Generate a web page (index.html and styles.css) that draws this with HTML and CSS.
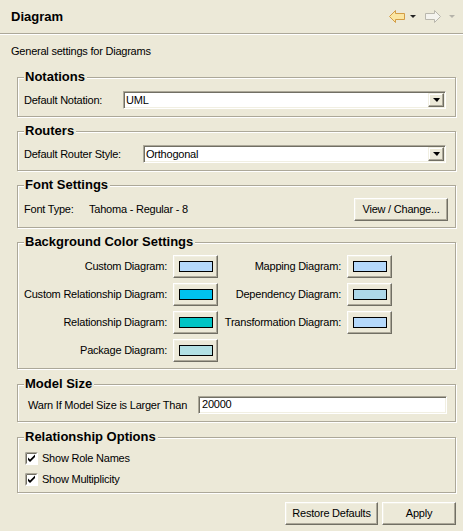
FILE: index.html
```html
<!DOCTYPE html>
<html>
<head>
<meta charset="utf-8">
<title>Diagram</title>
<link rel="stylesheet" href="styles.css">
</head>
<body>
<header class="hdr">
  <h1 class="hdr-title">Diagram</h1>
  <div class="nav">
    <svg class="nav-arrow" width="16" height="13" viewBox="0 0 16 13"><path d="M0.5 6.5 L6.5 0.5 L6.5 3.5 L15.5 3.5 L15.5 9.5 L6.5 9.5 L6.5 12.5 Z" fill="#fbe6a2" stroke="#d39d45"/></svg>
    <span class="caret caret-dark"></span>
    <svg class="nav-arrow nav-fwd" width="16" height="13" viewBox="0 0 16 13"><path d="M15.5 6.5 L9.5 0.5 L9.5 3.5 L0.5 3.5 L0.5 9.5 L9.5 9.5 L9.5 12.5 Z" fill="#f4f3ee" stroke="#b9b7ad"/></svg>
    <span class="caret caret-light"></span>
  </div>
</header>

<p class="desc">General settings for Diagrams</p>

<fieldset class="group">
  <legend>Notations</legend>
  <div class="row">
    <span class="lbl lbl-notation">Default Notation:</span>
    <div class="combo"><span class="combo-text">UML</span><span class="combo-btn"><span class="tri"></span></span></div>
  </div>
</fieldset>

<fieldset class="group">
  <legend>Routers</legend>
  <div class="row">
    <span class="lbl lbl-router">Default Router Style:</span>
    <div class="combo"><span class="combo-text">Orthogonal</span><span class="combo-btn"><span class="tri"></span></span></div>
  </div>
</fieldset>

<fieldset class="group group-font">
  <legend>Font Settings</legend>
  <div class="row">
    <span class="lbl lbl-font">Font Type:</span>
    <span class="font-value">Tahoma - Regular - 8</span>
    <button class="btn btn-view">View / Change...</button>
  </div>
</fieldset>

<fieldset class="group group-colors">
  <legend>Background Color Settings</legend>
  <div class="color-grid">
    <span class="clbl">Custom Diagram:</span>
    <button class="btn cbtn"><span class="swatch" style="background:#b5d9fb"></span></button>
    <span class="clbl">Mapping Diagram:</span>
    <button class="btn cbtn"><span class="swatch" style="background:#b5d9fb"></span></button>

    <span class="clbl">Custom Relationship Diagram:</span>
    <button class="btn cbtn"><span class="swatch" style="background:#00c2ef"></span></button>
    <span class="clbl">Dependency Diagram:</span>
    <button class="btn cbtn"><span class="swatch" style="background:#add8e9"></span></button>

    <span class="clbl">Relationship Diagram:</span>
    <button class="btn cbtn"><span class="swatch" style="background:#00c4c4"></span></button>
    <span class="clbl">Transformation Diagram:</span>
    <button class="btn cbtn"><span class="swatch" style="background:#b5d9fb"></span></button>

    <span class="clbl">Package Diagram:</span>
    <button class="btn cbtn"><span class="swatch" style="background:#b2e0e3"></span></button>
  </div>
</fieldset>

<fieldset class="group group-model">
  <legend>Model Size</legend>
  <div class="row">
    <span class="lbl lbl-model">Warn If Model Size is Larger Than</span>
    <div class="field">20000</div>
  </div>
</fieldset>

<fieldset class="group group-rel">
  <legend>Relationship Options</legend>
  <div class="check-row">
    <svg class="check" width="13" height="13" viewBox="0 0 13 13"><rect x="0" y="0" width="13" height="13" fill="#fff"/><path d="M0.5 12.5 V0.5 H12.5" fill="none" stroke="#aca899"/><path d="M1.5 11.5 V1.5 H11.5" fill="none" stroke="#716f64"/><path d="M3 5.5 L5 7.5 L10 2.5 V5 L5 10 L3 8 Z" fill="#000"/></svg>
    <span>Show Role Names</span>
  </div>
  <div class="check-row">
    <svg class="check" width="13" height="13" viewBox="0 0 13 13"><rect x="0" y="0" width="13" height="13" fill="#fff"/><path d="M0.5 12.5 V0.5 H12.5" fill="none" stroke="#aca899"/><path d="M1.5 11.5 V1.5 H11.5" fill="none" stroke="#716f64"/><path d="M3 5.5 L5 7.5 L10 2.5 V5 L5 10 L3 8 Z" fill="#000"/></svg>
    <span>Show Multiplicity</span>
  </div>
</fieldset>

<div class="actions">
  <button class="btn btn-restore">Restore Defaults</button>
  <button class="btn btn-apply">Apply</button>
</div>
</body>
</html>
```

FILE: styles.css
```css
* { box-sizing: border-box; }

html, body {
  margin: 0;
  padding: 0;
}

body {
  width: 463px;
  height: 531px;
  overflow: hidden;
  background: #ece9d8;
  color: #000;
  font-family: "Liberation Sans", Arial, sans-serif;
  font-size: 11px;
  line-height: 13px;
  letter-spacing: -0.22px;
}

/* header */
.hdr {
  height: 34px;
  display: flex;
  align-items: center;
  justify-content: space-between;
  padding: 0 8px 0 11px;
  border-bottom: 1px solid #aca899;
  box-shadow: 0 1px 0 #fff;
}

.hdr-title {
  margin: 0;
  font-size: 13px;
  font-weight: bold;
  line-height: 16px;
  letter-spacing: 0;
}

.nav {
  display: flex;
  align-items: center;
}

.nav-arrow { display: block; }
.nav-fwd { margin-left: 9px; }

.caret {
  width: 0;
  height: 0;
  border-left: 3px solid transparent;
  border-right: 3px solid transparent;
  border-top: 3px solid #000;
  margin-left: 5px;
}
.caret-dark { border-top-color: #222; }
.caret-light { border-top-color: #b5b3aa; margin-left: 8px; }

.desc {
  margin: 10px 0 0 11px;
  line-height: 14px;
}

/* group boxes */
.group {
  margin: 12px 7px 0 17px;
  padding: 7px 9px 7px 6px;
  border: 1px solid #aca899;
  box-shadow: inset 1px 1px 0 #fff, 1px 1px 0 #fff;
  min-width: 0;
}
.group + .group { margin-top: 7px; }

.group legend {
  padding: 0 2px 0 1px;
  font-size: 13px;
  font-weight: bold;
  line-height: 14px;
  letter-spacing: 0;
  background: #ece9d8;
}

.row {
  display: flex;
  align-items: center;
}

.lbl { flex: none; white-space: nowrap; }
.lbl-notation { width: 99px; }
.lbl-router { width: 119px; }
.lbl-font { width: 65px; }
.lbl-model { width: 174px; padding-left: 4px; }

/* combo */
.combo {
  flex: 1;
  height: 18px;
  display: flex;
  padding: 1px;
  background: #fff;
  border: 1px solid;
  border-color: #aca899 #fff #fff #aca899;
  box-shadow: inset 1px 1px 0 #716f64, inset -1px -1px 0 #f1efe2;
}

.combo-text {
  flex: 1;
  padding-left: 1px;
  line-height: 14px;
}

.combo-btn {
  width: 16px;
  display: flex;
  align-items: center;
  justify-content: center;
  background: #ece9d8;
  border: 1px solid;
  border-color: #f1efe2 #716f64 #716f64 #f1efe2;
  box-shadow: inset -1px -1px 0 #aca899, inset 1px 1px 0 #fff;
}

.tri {
  width: 0;
  height: 0;
  border-left: 4px solid transparent;
  border-right: 3px solid transparent;
  border-top: 4px solid #000;
}

/* buttons */
.btn {
  font: inherit;
  letter-spacing: inherit;
  color: #000;
  height: 23px;
  padding: 0;
  background: #ece9d8;
  border: 1px solid;
  border-color: #fff #716f64 #716f64 #fff;
  box-shadow: inset -1px -1px 0 #aca899, inset 1px 1px 0 #f1efe2;
  border-radius: 0;
}

.font-value { flex: 1; }

.btn-view {
  width: 94px;
  margin-right: -2px;
}

.group-font { padding-top: 6px; padding-bottom: 6px; }

/* color grid */
.group-colors { padding-top: 6px; padding-bottom: 6px; }

.color-grid {
  display: grid;
  grid-template-columns: 143px 45px 117px 45px;
  grid-auto-rows: 23px;
  column-gap: 6px;
  row-gap: 5px;
  align-items: center;
}

.clbl {
  justify-self: end;
  white-space: nowrap;
}

.cbtn {
  width: 45px;
  display: flex;
  align-items: center;
  justify-content: center;
}

.swatch {
  display: block;
  width: 34px;
  height: 11px;
  border: 1px solid #000;
}

/* model size */
.group.group-model { margin-top: 8px; padding-top: 5px; }

.field {
  flex: 1;
  height: 18px;
  margin-right: -1px;
  padding-left: 3px;
  line-height: 14px;
  background: #fff;
  border: 1px solid;
  border-color: #aca899 #fff #fff #aca899;
  box-shadow: inset 1px 1px 0 #716f64, inset -1px -1px 0 #f1efe2;
}

/* relationship options */
.group.group-rel { margin-top: 8px; padding-top: 8px; padding-bottom: 6px; }

.check-row {
  display: flex;
  align-items: center;
  height: 13px;
  padding-left: 1px;
}
.check-row + .check-row { margin-top: 8px; }

.check { display: block; margin-right: 4px; }

/* bottom buttons */
.actions {
  display: flex;
  justify-content: flex-end;
  gap: 4px;
  margin: 9px 7px 0 0;
}

.btn-restore { width: 93px; }
.btn-apply { width: 74px; }
```
